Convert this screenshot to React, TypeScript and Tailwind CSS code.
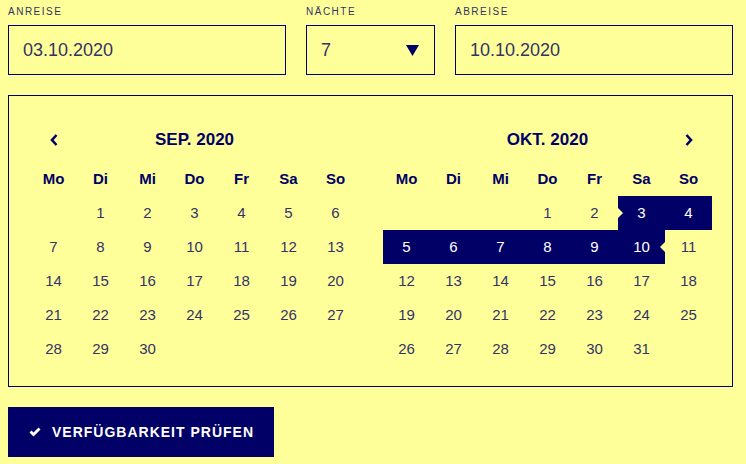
const navy = "text-[#000066]"

type Day = number | null

function buildDays(offset: number, count: number): Day[] {
  const days: Day[] = []
  for (let i = 0; i < offset; i++) days.push(null)
  for (let d = 1; d <= count; d++) days.push(d)
  while (days.length % 7 !== 0) days.push(null)
  return days
}

const weekdays = ["Mo", "Di", "Mi", "Do", "Fr", "Sa", "So"]

function Chevron({ dir }: { dir: "left" | "right" }) {
  return (
    <svg width="10" height="14" viewBox="0 0 10 14" className="text-[#000066]">
      <path
        d={dir === "left" ? "M7.5 2 L3 7 L7.5 12" : "M2.5 2 L7 7 L2.5 12"}
        fill="none"
        stroke="currentColor"
        strokeWidth="2.6"
      />
    </svg>
  )
}

function Month({
  title,
  offset,
  count,
  prev,
  next,
  range,
}: {
  title: string
  offset: number
  count: number
  prev?: boolean
  next?: boolean
  range?: [number, number]
}) {
  const days = buildDays(offset, count)
  return (
    <div className="w-[329px]">
      <div className="grid h-[34px] grid-cols-7 items-center">
        <div className="flex justify-center">{prev && <Chevron dir="left" />}</div>
        <div className={`col-span-5 text-center text-[17px] font-bold ${navy}`}>{title}</div>
        <div className="flex justify-center">{next && <Chevron dir="right" />}</div>
      </div>
      <div className="mt-[5px] grid h-[34px] grid-cols-7 items-center">
        {weekdays.map((w) => (
          <div key={w} className={`text-center text-[15px] font-bold ${navy}`}>
            {w}
          </div>
        ))}
      </div>
      <div className="grid grid-cols-7">
        {days.map((d, i) => {
          const inRange = range && d !== null && d >= range[0] && d <= range[1]
          const isStart = range && d === range[0]
          const isEnd = range && d === range[1]
          return (
            <div
              key={i}
              className={`relative flex h-[34px] items-center justify-center text-[15px] ${
                inRange ? "bg-[#000066] text-white" : "text-[#333366]"
              }`}
            >
              {d}
              {isStart && (
                <span className="absolute left-0 top-1/2 -translate-y-1/2 border-y-[5px] border-l-[5px] border-y-transparent border-l-[#ffff99]" />
              )}
              {isEnd && (
                <span className="absolute right-0 top-1/2 -translate-y-1/2 border-y-[5px] border-r-[5px] border-y-transparent border-r-[#ffff99]" />
              )}
            </div>
          )
        })}
      </div>
    </div>
  )
}

function Field({ label, value, width, select }: { label: string; value: string; width: string; select?: boolean }) {
  return (
    <div className={width}>
      <div className="h-[25px] pt-[6px] text-[10px] leading-[12px] tracking-[1.5px] text-[#333366]">{label}</div>
      <div className="flex h-[50px] items-center justify-between border border-[#000066] pl-[14px] pr-[15px]">
        <span className="text-[18px] text-[#333366]">{value}</span>
        {select && (
          <svg width="13" height="11" viewBox="0 0 13 11">
            <path d="M0 0 H13 L6.5 11 Z" fill="#000066" />
          </svg>
        )}
      </div>
    </div>
  )
}

export default function App() {
  return (
    <div className="h-[464px] w-[746px] bg-[#ffff99] px-[8px] font-['Liberation_Sans',Arial,sans-serif]">
      <div className="flex gap-[20px]">
        <Field label="ANREISE" value="03.10.2020" width="w-[278px]" />
        <Field label="NÄCHTE" value="7" width="w-[129px]" select />
        <Field label="ABREISE" value="10.10.2020" width="w-[278px]" />
      </div>
      <div className="mt-[20px] flex h-[292px] w-[725px] gap-[24px] border border-[#000066] pl-[21px] pt-[27px]">
        <Month title="SEP. 2020" offset={1} count={30} prev />
        <Month title="OKT. 2020" offset={3} count={31} next range={[3, 10]} />
      </div>
      <button className="mt-[20px] flex h-[50px] w-[266px] items-center gap-[11px] bg-[#000066] pl-[21px] text-[14px] font-bold tracking-[1px] text-white">
        <svg width="12" height="10" viewBox="0 0 12 10">
          <path d="M0.5 5.5 L2.5 3.5 L4.5 5.5 L9.5 0.5 L11.5 2.5 L4.5 9.5 Z" fill="white" />
        </svg>
        VERFÜGBARKEIT PRÜFEN
      </button>
    </div>
  )
}
